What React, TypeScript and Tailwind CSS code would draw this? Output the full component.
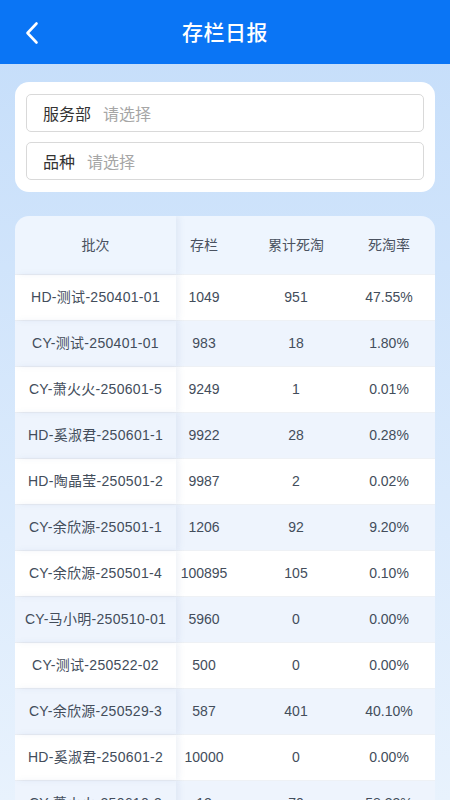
import React from 'react';

const rows = [
  ['HD-测试-250401-01', '1049', '951', '47.55%'],
  ['CY-测试-250401-01', '983', '18', '1.80%'],
  ['CY-萧火火-250601-5', '9249', '1', '0.01%'],
  ['HD-奚淑君-250601-1', '9922', '28', '0.28%'],
  ['HD-陶晶莹-250501-2', '9987', '2', '0.02%'],
  ['CY-余欣源-250501-1', '1206', '92', '9.20%'],
  ['CY-余欣源-250501-4', '100895', '105', '0.10%'],
  ['CY-马小明-250510-01', '5960', '0', '0.00%'],
  ['CY-测试-250522-02', '500', '0', '0.00%'],
  ['CY-余欣源-250529-3', '587', '401', '40.10%'],
  ['HD-奚淑君-250601-2', '10000', '0', '0.00%'],
  ['CY-萧火火-250610-3', '12', '70', '58.33%'],
];

const font = { fontFamily: '"Noto Sans CJK SC", "Noto Sans", sans-serif' };
const tableFont = { fontFamily: '"Liberation Sans", "Noto Sans CJK SC", sans-serif' };

function FilterInput({ label }: { label: string }) {
  return (
    <div className="flex h-[38px] items-center rounded-[5px] border border-[#d9d9d9] bg-white px-4 text-[16px]">
      <span className="text-[#333]">{label}</span>
      <span className="ml-3 text-[#a6a6a6]">请选择</span>
    </div>
  );
}

export default function App() {
  return (
    <div className="h-[800px] w-[450px] overflow-hidden bg-gradient-to-b from-[#c4ddfa] to-[#e8f2fd]" style={font}>
      {/* Header */}
      <div className="relative flex h-[64px] items-center justify-center bg-[#0a75f5]">
        <svg className="absolute left-[24px] top-[21px]" width="16" height="24" viewBox="0 0 16 24" fill="none">
          <path d="M12.5 2.5 L3.5 12 L12.5 21.5" stroke="white" strokeWidth="2.6" strokeLinecap="round" strokeLinejoin="round" />
        </svg>
        <h1 className="text-[21px] font-medium tracking-wide text-white">存栏日报</h1>
      </div>

      {/* Filters */}
      <div className="mx-[15px] mt-[18px] flex flex-col gap-[10px] rounded-[14px] bg-white px-[11px] py-[12px]">
        <FilterInput label="服务部" />
        <FilterInput label="品种" />
      </div>

      {/* Table */}
      <div className="mx-[15px] mt-[24px] overflow-hidden rounded-t-[14px] text-[14px] text-[#434d5b]" style={tableFont}>
        <div className="grid h-[58px] grid-cols-[161px_56px_128px_58px_1fr] items-center bg-[#eef5fe] text-[#4a5260]">
          <div className="flex h-full items-center justify-center shadow-[3px_0_6px_rgba(120,150,190,0.12)]">批次</div>
          <div className="text-center">存栏</div>
          <div className="text-center">累计死淘</div>
          <div className="text-center">死淘率</div>
          <div />
        </div>
        {rows.map((r, i) => (
          <div
            key={i}
            className={`grid h-[46px] grid-cols-[161px_56px_128px_58px_1fr] items-center border-t border-[#eef1f5] ${i % 2 === 0 ? 'bg-white' : 'bg-[#eef4fd]'}`}
          >
            <div className="flex h-full items-center justify-center whitespace-nowrap tracking-[0.3px] shadow-[3px_0_6px_rgba(120,150,190,0.12)]">{r[0]}</div>
            <div className="text-center whitespace-nowrap">{r[1]}</div>
            <div className="text-center">{r[2]}</div>
            <div className="text-center">{r[3]}</div>
            <div />
          </div>
        ))}
      </div>
    </div>
  );
}
